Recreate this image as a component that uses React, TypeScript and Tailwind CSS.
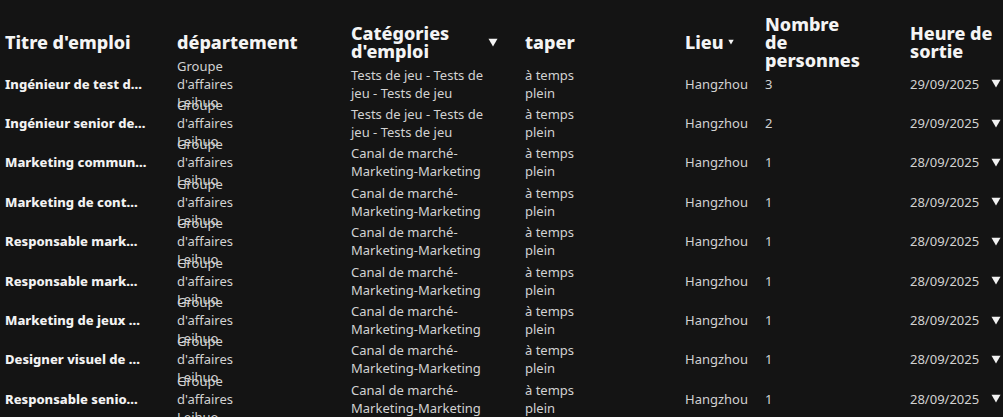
const rows = [
  { title: "Ingénieur de test d...", cat: ["Tests de jeu - Tests de", "jeu - Tests de jeu"], n: "3", date: "29/09/2025" },
  { title: "Ingénieur senior de...", cat: ["Tests de jeu - Tests de", "jeu - Tests de jeu"], n: "2", date: "29/09/2025" },
  { title: "Marketing commun...", cat: ["Canal de marché-", "Marketing-Marketing"], n: "1", date: "28/09/2025" },
  { title: "Marketing de cont...", cat: ["Canal de marché-", "Marketing-Marketing"], n: "1", date: "28/09/2025" },
  { title: "Responsable mark...", cat: ["Canal de marché-", "Marketing-Marketing"], n: "1", date: "28/09/2025" },
  { title: "Responsable mark...", cat: ["Canal de marché-", "Marketing-Marketing"], n: "1", date: "28/09/2025" },
  { title: "Marketing de jeux ...", cat: ["Canal de marché-", "Marketing-Marketing"], n: "1", date: "28/09/2025" },
  { title: "Designer visuel de ...", cat: ["Canal de marché-", "Marketing-Marketing"], n: "1", date: "28/09/2025" },
  { title: "Responsable senio...", cat: ["Canal de marché-", "Marketing-Marketing"], n: "1", date: "28/09/2025" },
];

function Caret({ className }: { className?: string }) {
  return (
    <svg viewBox="0 0 10 9" className={className} fill="currentColor">
      <path d="M0.5 0.8 L9.5 0.8 L5 8.6 Z" strokeLinejoin="round" />
    </svg>
  );
}

export default function App() {
  return (
    <div
      className="w-[1003px] h-[417px] overflow-hidden bg-[#141414] pt-[20px] pl-[5px]"
      style={{ fontFamily: '"Noto Sans", "Open Sans", sans-serif' }}
    >
      {/* en-tête */}
      <div className="flex h-[44px] items-center text-[18px] font-extrabold leading-[18px] text-[#f4f4f4]">
        <div className="w-[172px]">Titre d'emploi</div>
        <div className="w-[174px]">département</div>
        <div className="w-[174px] flex items-center pr-[27px]">
          <span className="flex-1">
            Catégories
            <br />
            d'emploi
          </span>
          <Caret className="w-[10px] h-[9px]" />
        </div>
        <div className="w-[160px]">taper</div>
        <div className="w-[80px] flex items-center gap-[4px]">
          Lieu
          <Caret className="w-[6px] h-[6px]" />
        </div>
        <div className="w-[145px]">
          Nombre
          <br />
          de
          <br />
          personnes
        </div>
        <div className="flex-1">
          Heure de
          <br />
          sortie
        </div>
      </div>

      {/* lignes */}
      {rows.map((r, i) => (
        <div key={i} className="flex h-[39.4px] items-center text-[13px] leading-[18px] text-[#d2d2d2]">
          <div className="w-[172px] font-extrabold text-[#f2f2f2] whitespace-nowrap">{r.title}</div>
          <div className="w-[174px] h-full flex flex-col justify-center">
            <span>Groupe</span>
            <span>d'affaires</span>
            <span>Leihuo</span>
          </div>
          <div className="w-[174px]">
            {r.cat[0]}
            <br />
            {r.cat[1]}
          </div>
          <div className="w-[160px]">
            à temps
            <br />
            plein
          </div>
          <div className="w-[80px]">Hangzhou</div>
          <div className="w-[145px]">{r.n}</div>
          <div className="flex-1 flex items-center justify-between pr-[2px]">
            <span>{r.date}</span>
            <Caret className="w-[10px] h-[9px] text-[#f2f2f2]" />
          </div>
        </div>
      ))}
    </div>
  );
}
